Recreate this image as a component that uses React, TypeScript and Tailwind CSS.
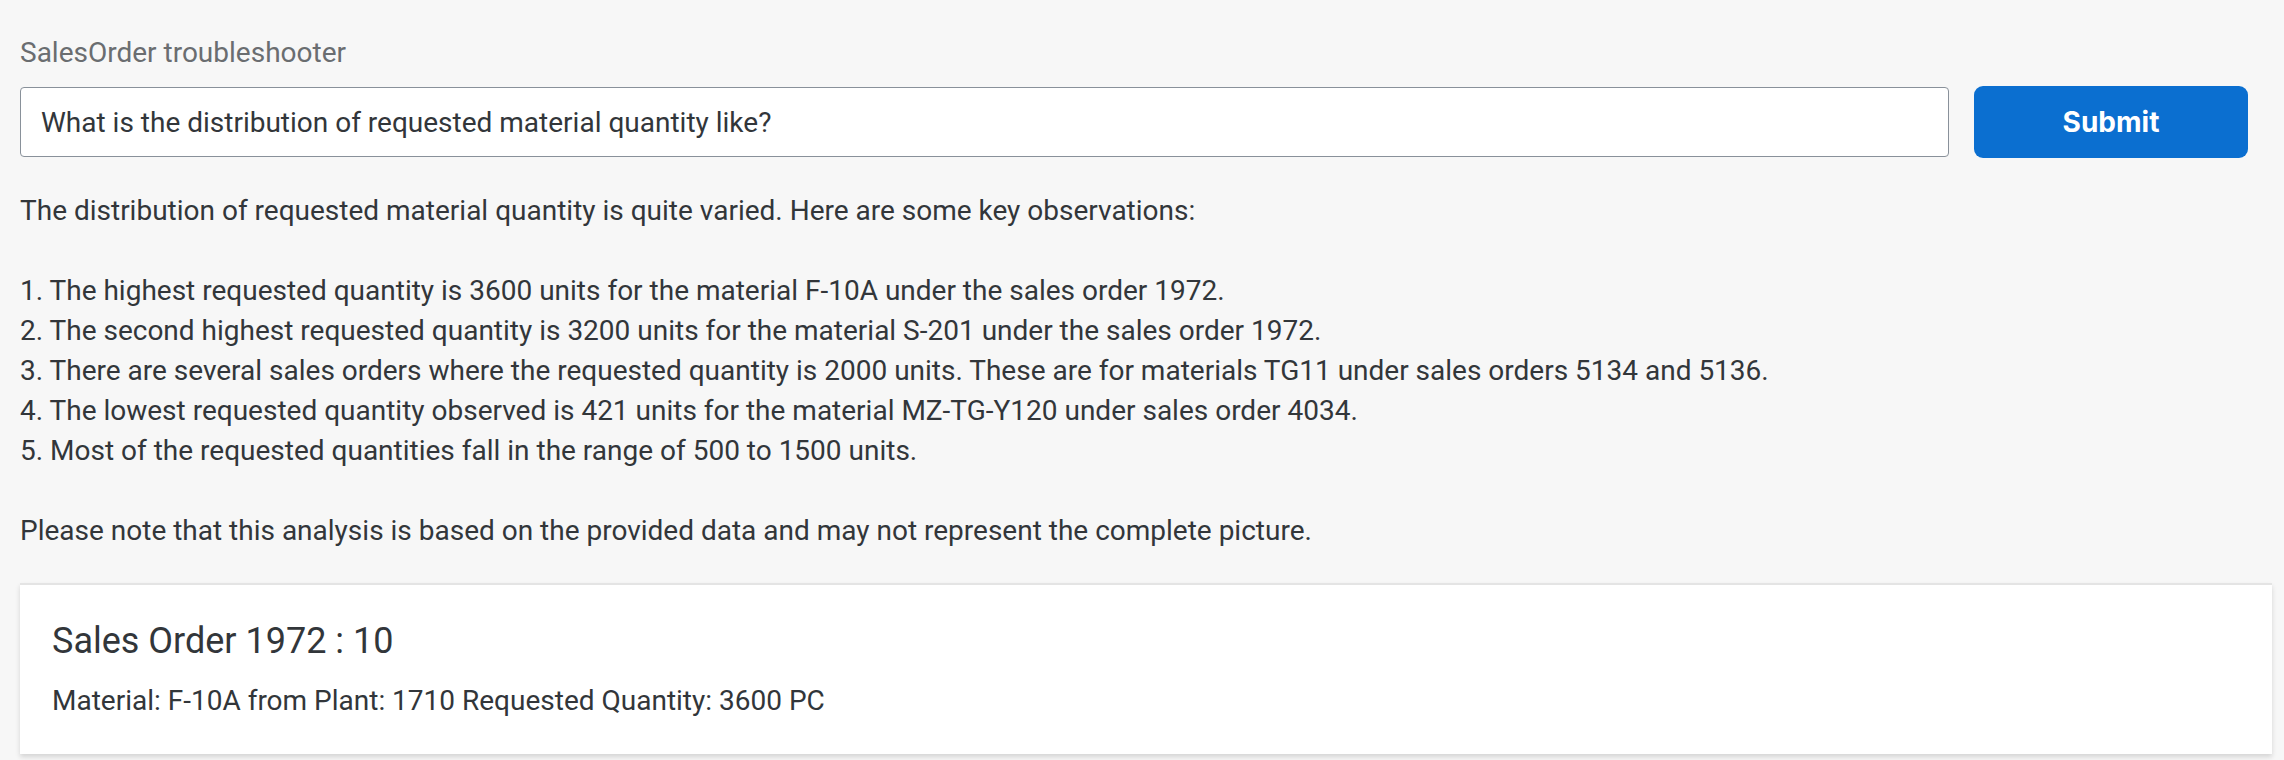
export default function App() {
  const answer = [
    "The distribution of requested material quantity is quite varied. Here are some key observations:",
    "",
    "1. The highest requested quantity is 3600 units for the material F-10A under the sales order 1972.",
    "2. The second highest requested quantity is 3200 units for the material S-201 under the sales order 1972.",
    "3. There are several sales orders where the requested quantity is 2000 units. These are for materials TG11 under sales orders 5134 and 5136.",
    "4. The lowest requested quantity observed is 421 units for the material MZ-TG-Y120 under sales order 4034.",
    "5. Most of the requested quantities fall in the range of 500 to 1500 units.",
    "",
    "Please note that this analysis is based on the provided data and may not represent the complete picture.",
  ].join("\n");

  return (
    <div
      className="min-h-[760px] bg-[#f7f7f7] pl-[20px] pr-[12px] pt-[33px] text-[#32363a]"
      style={{ fontFamily: "Roboto, 'Liberation Sans', sans-serif" }}
    >
      {/* Title + question form */}
      <label className="block text-[28px] leading-[40px] text-[#6a6d70]">SalesOrder troubleshooter</label>
      <div className="mt-[14px] mr-[24px] flex gap-[25px]">
        <input
          type="text"
          readOnly
          value="What is the distribution of requested material quantity like?"
          className="h-[70px] flex-1 rounded-[4px] border border-[#89919a] bg-white px-[20px] text-[28px] text-[#32363a] outline-none"
          style={{ fontFamily: "Roboto, 'Liberation Sans', sans-serif" }}
        />
        <button
          type="button"
          className="h-[72px] w-[274px] -mt-px rounded-[9px] bg-[#0b6fd0] text-[28px] font-bold text-white"
          style={{ fontFamily: "Inter, 'Liberation Sans', sans-serif" }}
        >
          Submit
        </button>
      </div>

      {/* Answer */}
      <p className="mt-[33px] whitespace-pre-wrap text-[28px] leading-[40px]">{answer}</p>

      {/* Result card */}
      <div className="mt-[32px] border-t-2 border-[#e4e4e4] bg-white px-[32px] pt-[32px] pb-[33px] shadow-[0_3px_5px_rgba(0,0,0,0.14)]">
        <h2 className="text-[36px] leading-[48px]">Sales Order 1972 : 10</h2>
        <p className="mt-[16px] text-[28px] leading-[40px]">Material: F-10A from Plant: 1710 Requested Quantity: 3600 PC</p>
      </div>
    </div>
  );
}
